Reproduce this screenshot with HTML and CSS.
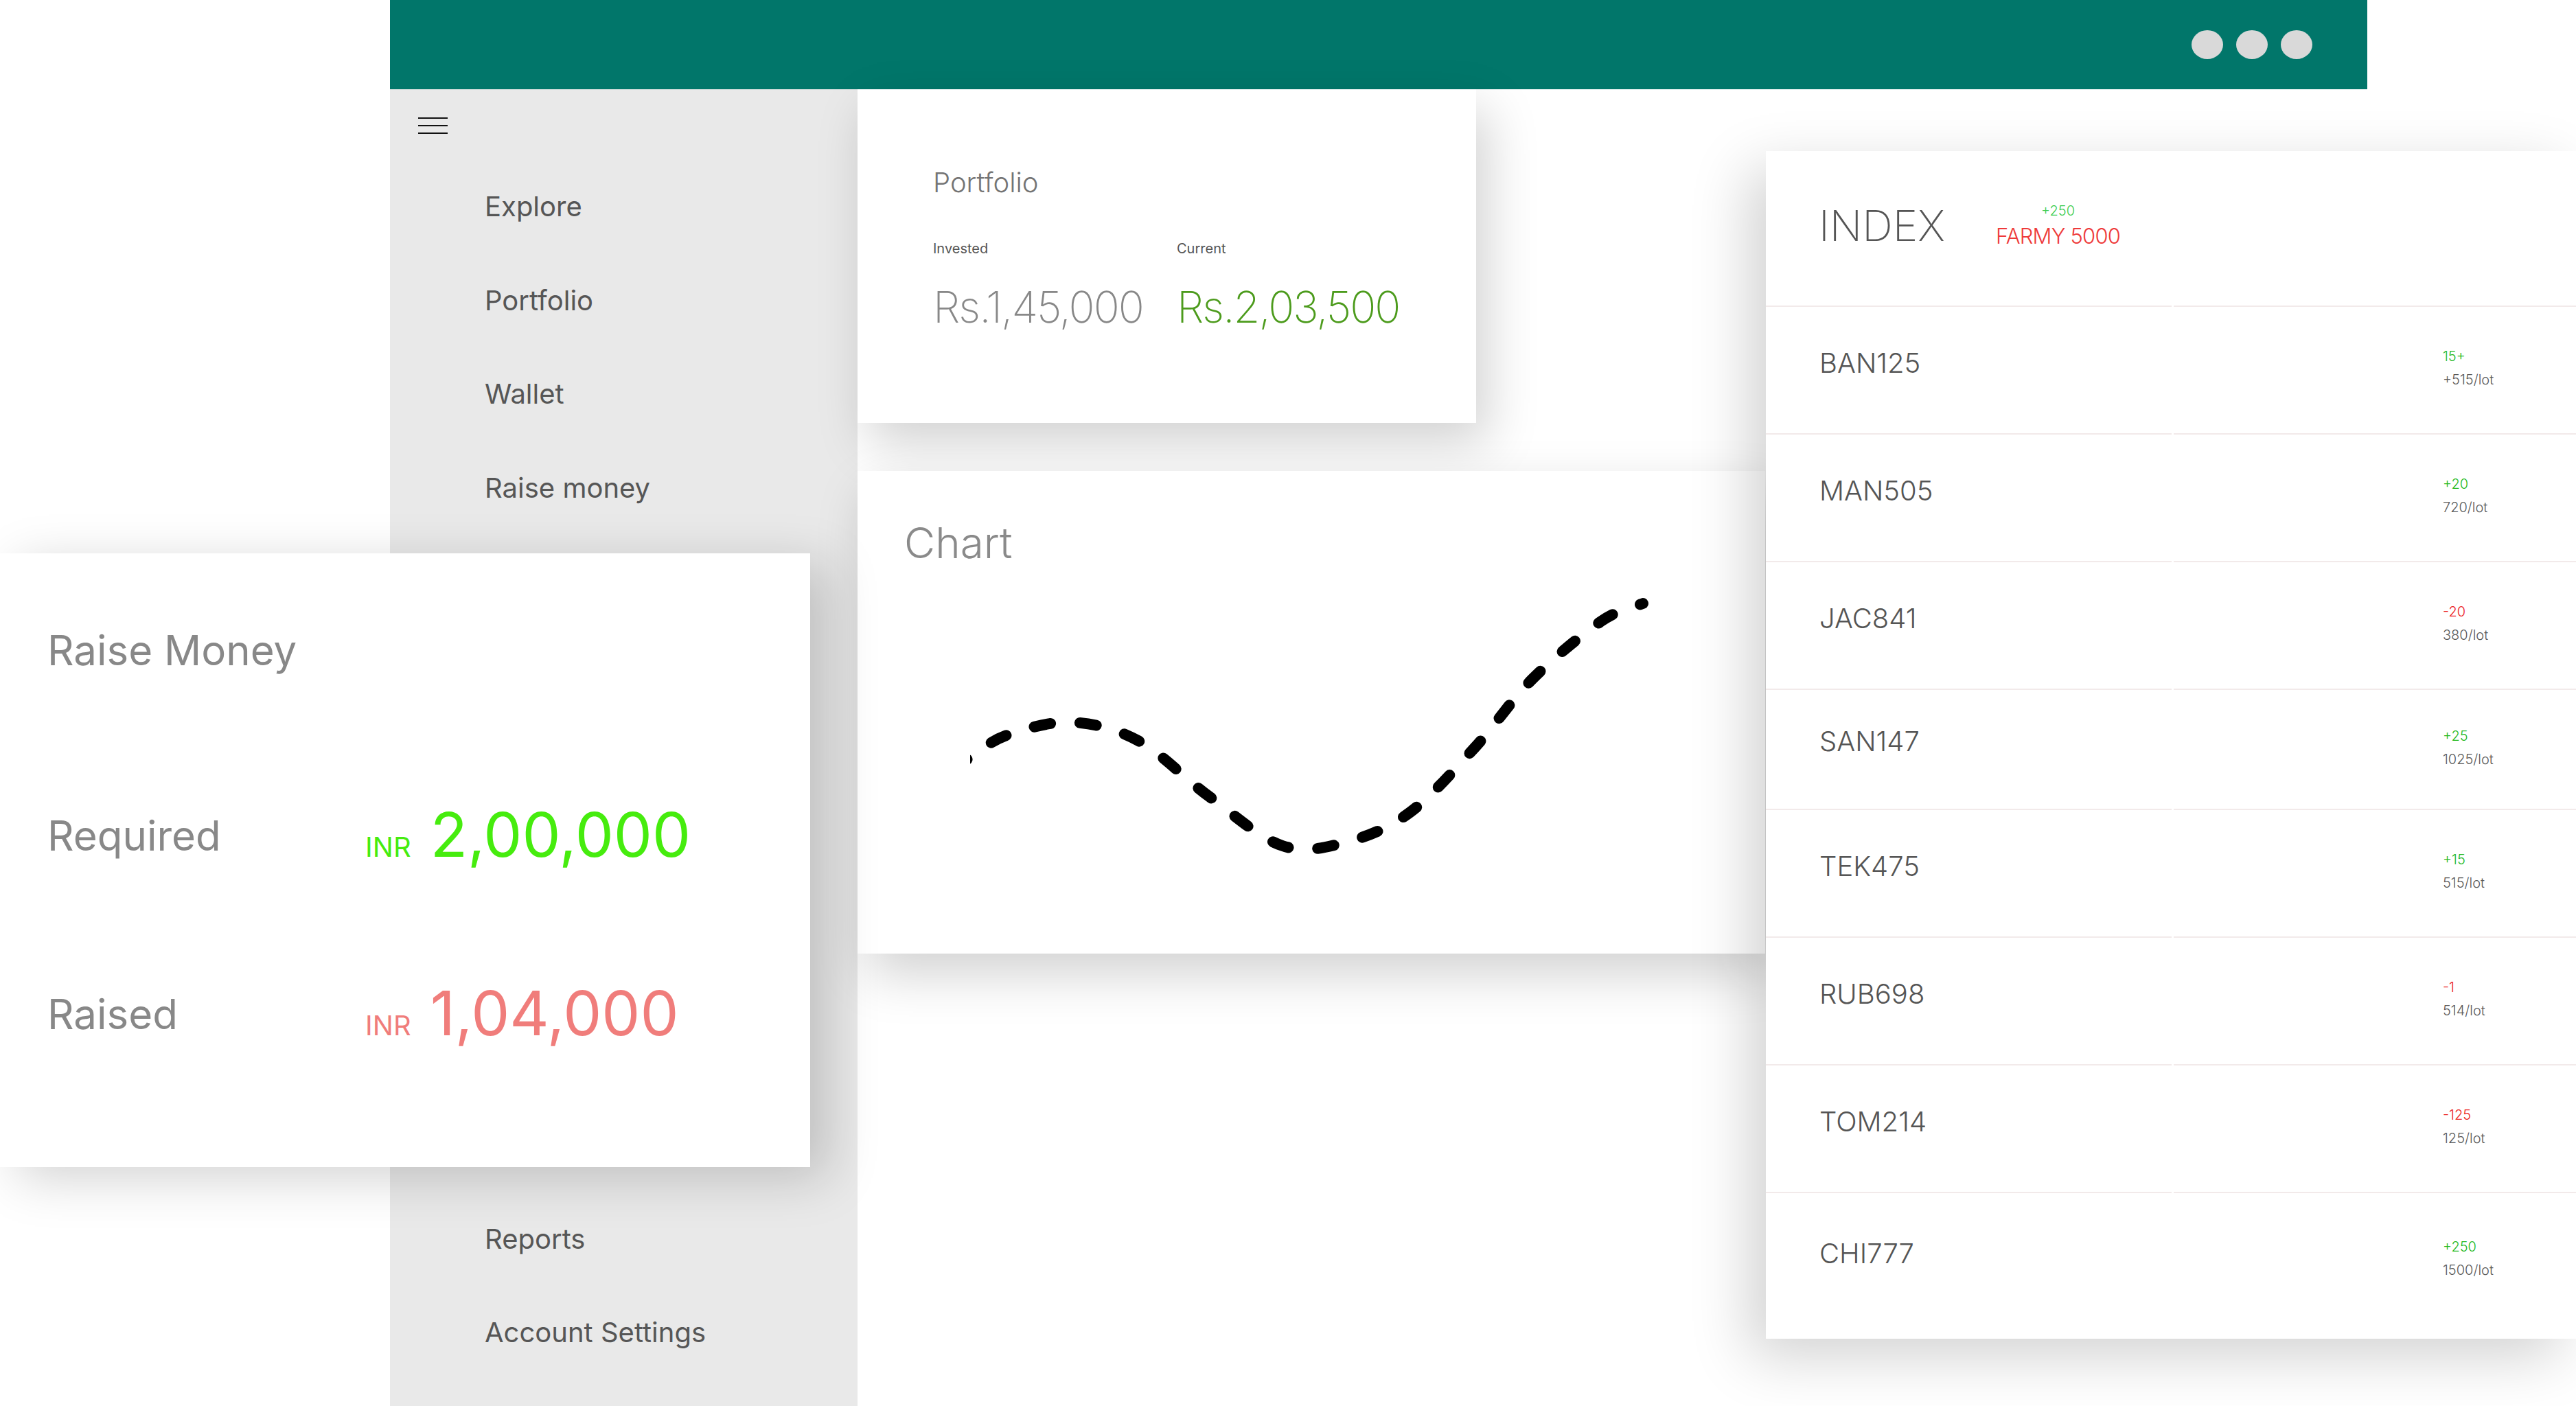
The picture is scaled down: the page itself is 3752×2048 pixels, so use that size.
FILE: index.html
```html
<!DOCTYPE html>
<html lang="en">
<head>
<meta charset="utf-8">
<title>Farmy Dashboard</title>
<link rel="stylesheet" href="styles.css">
</head>
<body>
<div class="app">
  <header class="topbar">
    <div class="dots"><span class="dot"></span><span class="dot"></span><span class="dot"></span></div>
  </header>
  <div class="workspace">
    <aside class="sidebar">
      <div class="hamburger"><span></span><span></span><span></span></div>
      <nav class="nav">
        <a class="nav-item">Explore</a>
        <a class="nav-item">Portfolio</a>
        <a class="nav-item">Wallet</a>
        <a class="nav-item">Raise money</a>
        <a class="nav-item nav-item--lower">Reports</a>
        <a class="nav-item">Account Settings</a>
      </nav>
    </aside>
    <main class="main">
      <section class="card portfolio">
        <h2 class="portfolio-title">Portfolio</h2>
        <div class="portfolio-grid">
          <span class="p-label">Invested</span>
          <span class="p-label">Current</span>
          <span class="p-value">Rs.1,45,000</span>
          <span class="p-value p-value--up">Rs.2,03,500</span>
        </div>
      </section>
      <section class="card chart">
        <h2 class="chart-title">Chart</h2>
        <svg class="chart-line" viewBox="1413 870 1158 519" width="1158" height="519">
          <path d="M1400,1111.3 L1412,1104 C1421,1098.5 1441.3,1079.7 1466,1071 C1490.7,1062.3 1528,1050.7 1560,1052 C1592,1053.3 1624.5,1061 1658,1079 C1691.5,1097 1726,1134.5 1761,1160 C1796,1185.5 1834.3,1221 1868,1232 C1901.7,1243 1932,1234.2 1963,1226 C1994,1217.8 2023.2,1205.8 2054,1183 C2084.8,1160.2 2118.3,1121.3 2148,1089 C2177.7,1056.7 2201.3,1019.7 2232,989 C2262.7,958.3 2305.2,923.3 2332,905 C2358.8,886.7 2382.8,883.3 2393,879" fill="none" stroke="#000" stroke-width="16" stroke-linecap="round" stroke-dasharray="24 43" stroke-dashoffset="14"/>
        </svg>
      </section>
    </main>
  </div>
</div>

<section class="raise-card">
  <h2 class="rm-title">Raise Money</h2>
  <div class="rm-row rm-row--required">
    <span class="rm-label">Required</span><span class="rm-cur">INR</span><span class="rm-amount">2,00,000</span>
  </div>
  <div class="rm-row rm-row--raised">
    <span class="rm-label">Raised</span><span class="rm-cur">INR</span><span class="rm-amount">1,04,000</span>
  </div>
</section>

<section class="index-card">
  <div class="ix-row ix-row--head">
    <div class="ix-cell ix-cell--name">
      <span class="ix-title">INDEX</span>
      <div class="farmy">
        <span class="farmy-change">+250</span>
        <span class="farmy-name">FARMY 5000</span>
      </div>
    </div>
    <div class="ix-cell"></div>
  </div>
  <div class="ix-row">
    <div class="ix-cell ix-cell--name"><span class="ix-name">BAN125</span></div>
    <div class="ix-cell ix-cell--quote"><div class="ix-quote"><span class="up">15+</span><span class="lot">+515/lot</span></div></div>
  </div>
  <div class="ix-row">
    <div class="ix-cell ix-cell--name"><span class="ix-name">MAN505</span></div>
    <div class="ix-cell ix-cell--quote"><div class="ix-quote"><span class="up">+20</span><span class="lot">720/lot</span></div></div>
  </div>
  <div class="ix-row">
    <div class="ix-cell ix-cell--name"><span class="ix-name">JAC841</span></div>
    <div class="ix-cell ix-cell--quote"><div class="ix-quote"><span class="down">-20</span><span class="lot">380/lot</span></div></div>
  </div>
  <div class="ix-row ix-row--short">
    <div class="ix-cell ix-cell--name"><span class="ix-name">SAN147</span></div>
    <div class="ix-cell ix-cell--quote"><div class="ix-quote"><span class="up">+25</span><span class="lot">1025/lot</span></div></div>
  </div>
  <div class="ix-row">
    <div class="ix-cell ix-cell--name"><span class="ix-name">TEK475</span></div>
    <div class="ix-cell ix-cell--quote"><div class="ix-quote"><span class="up">+15</span><span class="lot">515/lot</span></div></div>
  </div>
  <div class="ix-row">
    <div class="ix-cell ix-cell--name"><span class="ix-name">RUB698</span></div>
    <div class="ix-cell ix-cell--quote"><div class="ix-quote"><span class="down">-1</span><span class="lot">514/lot</span></div></div>
  </div>
  <div class="ix-row">
    <div class="ix-cell ix-cell--name"><span class="ix-name">TOM214</span></div>
    <div class="ix-cell ix-cell--quote"><div class="ix-quote"><span class="down">-125</span><span class="lot">125/lot</span></div></div>
  </div>
  <div class="ix-row ix-row--last">
    <div class="ix-cell ix-cell--name"><span class="ix-name">CHI777</span></div>
    <div class="ix-cell ix-cell--quote"><div class="ix-quote"><span class="up">+250</span><span class="lot">1500/lot</span></div></div>
  </div>
</section>
</body>
</html>
```

FILE: styles.css
```css
* { box-sizing: border-box; }

body {
  margin: 0;
  width: 3752px;
  height: 2048px;
  overflow: hidden;
  position: relative;
  background: #ffffff;
  font-family: Inter, "Noto Sans", "Liberation Sans", sans-serif;
}

.app {
  margin-left: 568px;
  width: 2880px;
}

/* ---------- top bar ---------- */
.topbar {
  height: 130px;
  background: #01766a;
  display: flex;
  justify-content: flex-end;
  align-items: center;
  padding-right: 80px;
}
.dots { display: flex; gap: 19px; }
.dot {
  width: 46px;
  height: 42px;
  border-radius: 50%;
  background: #d9d9d9;
}

/* ---------- workspace ---------- */
.workspace {
  display: flex;
  height: 1918px;
}

.sidebar {
  flex: none;
  width: 681px;
  background: #e9e9e9;
  padding: 41px 0 0 41px;
}
.hamburger {
  width: 43px;
  height: 24px;
  display: flex;
  flex-direction: column;
  justify-content: space-between;
}
.hamburger span {
  height: 2px;
  background: #111;
}
.nav {
  display: flex;
  flex-direction: column;
  gap: 96.7px;
  margin-top: 86px;
  padding-left: 97px;
}
.nav-item {
  font-size: 40px;
  line-height: 40px;
  color: #565656;
  white-space: nowrap;
}
.nav-item--lower { margin-top: 957px; }

.main {
  flex: 1;
  display: flex;
  flex-direction: column;
  align-items: flex-start;
  gap: 70px;
}

.card {
  background: #fff;
  box-shadow: 16px 30px 70px rgba(0, 0, 0, 0.18);
}

/* portfolio */
.portfolio {
  width: 901px;
  height: 486px;
  padding: 116px 0 0 110px;
}
.portfolio-title {
  margin: 0;
  font-size: 40px;
  line-height: 40px;
  font-weight: 300;
  color: #747474;
}
.portfolio-grid {
  display: grid;
  grid-template-columns: 355px auto;
  row-gap: 43px;
  margin-top: 66px;
}
.p-label {
  font-size: 20px;
  line-height: 20px;
  color: #555;
}
.p-value {
  font-size: 63px;
  line-height: 64px;
  font-weight: 200;
  color: #888;
  letter-spacing: -2px;
  white-space: nowrap;
}
.p-value--up { color: #4c9b1c; }

/* chart */
.chart {
  width: 1322px;
  height: 703px;
  padding-top: 74px;
  overflow: hidden;
}
.chart-title {
  margin: 0 0 48px 68px;
  font-size: 62px;
  line-height: 62px;
  font-weight: 300;
  color: #8a8a8a;
}
.chart-line {
  display: block;
  margin-left: 164px;
}

/* ---------- Raise money overlay ---------- */
.raise-card {
  position: absolute;
  left: 0;
  top: 806px;
  width: 1180px;
  height: 894px;
  z-index: 3;
  background: #fff;
  padding: 110.8px 0 0 69px;
  box-shadow: 26px 16px 70px rgba(0, 0, 0, 0.18);
}
.rm-title {
  margin: 0;
  font-size: 60px;
  line-height: 60px;
  font-weight: 400;
  color: #888;
}
.rm-row {
  font-size: 89px;
  line-height: 89px;
  white-space: nowrap;
}
.rm-row--required { margin-top: 194.4px; color: #46ec0e; }
.rm-row--raised { margin-top: 171px; color: #f07d7b; }
.rm-label {
  display: inline-block;
  width: 463px;
  font-size: 60px;
  line-height: 60px;
  color: #888;
  vertical-align: 9px;
}
.rm-cur {
  font-size: 40px;
  line-height: 40px;
  margin-right: 28px;
}

/* ---------- Index overlay ---------- */
.index-card {
  position: absolute;
  left: 2572px;
  top: 220px;
  width: 1180px;
  height: 1730px;
  z-index: 3;
  background: #fff;
  display: flex;
  flex-direction: column;
  box-shadow: -24px 26px 80px rgba(0, 0, 0, 0.18);
}
.ix-row {
  display: grid;
  grid-template-columns: 591px 1fr;
  column-gap: 3px;
  height: 186px;
  flex: none;
}
.ix-row--head { height: 227px; }
.ix-row--short { height: 175px; }
.ix-row--last { flex: 1; height: auto; }

.ix-cell {
  display: flex;
  align-items: center;
  border-bottom: 2px solid #f2eaea;
}
.ix-row--last .ix-cell { border-bottom: none; }

.ix-cell--name {
  padding: 0 0 20px 78px;
}
.ix-row--head .ix-cell--name {
  padding: 0 0 8px 77px;
  gap: 74px;
}
.ix-row--short .ix-cell--name { padding-bottom: 24px; }
.ix-row--last .ix-cell--name { padding-bottom: 36px; }
.ix-cell--quote {
  padding: 0 0 6px 392px;
}
.ix-row--last .ix-cell--quote { padding-bottom: 22px; }

.ix-title {
  font-size: 62px;
  line-height: 62px;
  font-weight: 200;
  color: #555;
}
.farmy {
  display: flex;
  flex-direction: column;
  align-items: center;
}
.farmy-change {
  font-size: 20px;
  line-height: 20px;
  font-weight: 300;
  color: #3dcd50;
  margin-bottom: 11px;
}
.farmy-name {
  font-size: 31px;
  line-height: 32px;
  font-weight: 300;
  letter-spacing: -0.8px;
  color: #ee3a3a;
}

.ix-name {
  font-size: 40px;
  line-height: 40px;
  font-weight: 300;
  color: #555;
}
.ix-quote {
  display: flex;
  flex-direction: column;
  font-size: 20px;
  line-height: 34px;
  font-weight: 300;
}
.ix-quote .up { color: #24b91e; }
.ix-quote .down { color: #ec2424; }
.ix-quote .lot { color: #5a5a5a; }
```
